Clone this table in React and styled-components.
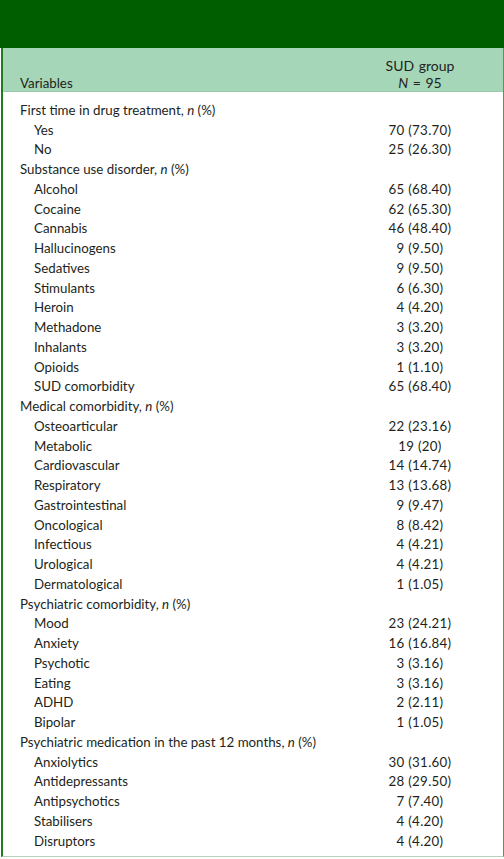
import React from "react";
import styled, { createGlobalStyle } from "styled-components";

const Global = createGlobalStyle`
  html, body { margin: 0; padding: 0; background: #ffffff; }
  body { font-family: Lato, "Open Sans", "Liberation Sans", sans-serif; color: #231f20; }
`;

const Page = styled.div`
  width: 504px;
`;

const TopBar = styled.div`
  height: 48px;
  background: #005e00;
`;

const Table = styled.div`
  margin-left: 1px;
  width: 500px;
  border-left: 2px solid #217b21;
  border-right: 1px solid #4f9a5c;
  border-bottom: 1px solid #b7cfbd;
`;

const HeadRow = styled.div`
  display: grid;
  grid-template-columns: 1fr 166px;
  align-items: end;
  height: 44px;
  background: #a5d6b7;
  border-bottom: 1px solid #9cc9ac;
  box-sizing: border-box;
  font-size: 13.3px;
`;

const HeadLabel = styled.div`
  padding-left: 17px;
  line-height: 16px;
`;

const HeadValue = styled.div`
  text-align: center;
  line-height: 17px;
  padding-bottom: 0;
  font-size: 14px;
  word-spacing: 1px;
`;

const Body = styled.div`
  padding: 8px 0 5px;
`;

const Row = styled.div`
  display: grid;
  grid-template-columns: 1fr 166px;
  height: 19.76px;
  align-items: center;
  font-size: 13.3px;
`;

const Label = styled.div`
  padding-left: ${(p) => (p.$indent ? 31 : 17)}px;
  white-space: nowrap;
`;

const Value = styled.div`
  text-align: center;
  white-space: nowrap;
  letter-spacing: 0.3px;
`;

const rows = [
  ["h", "First time in drug treatment"],
  ["i", "Yes", "70 (73.70)"],
  ["i", "No", "25 (26.30)"],
  ["h", "Substance use disorder"],
  ["i", "Alcohol", "65 (68.40)"],
  ["i", "Cocaine", "62 (65.30)"],
  ["i", "Cannabis", "46 (48.40)"],
  ["i", "Hallucinogens", "9 (9.50)"],
  ["i", "Sedatives", "9 (9.50)"],
  ["i", "Stimulants", "6 (6.30)"],
  ["i", "Heroin", "4 (4.20)"],
  ["i", "Methadone", "3 (3.20)"],
  ["i", "Inhalants", "3 (3.20)"],
  ["i", "Opioids", "1 (1.10)"],
  ["i", "SUD comorbidity", "65 (68.40)"],
  ["h", "Medical comorbidity"],
  ["i", "Osteoarticular", "22 (23.16)"],
  ["i", "Metabolic", "19 (20)"],
  ["i", "Cardiovascular", "14 (14.74)"],
  ["i", "Respiratory", "13 (13.68)"],
  ["i", "Gastrointestinal", "9 (9.47)"],
  ["i", "Oncological", "8 (8.42)"],
  ["i", "Infectious", "4 (4.21)"],
  ["i", "Urological", "4 (4.21)"],
  ["i", "Dermatological", "1 (1.05)"],
  ["h", "Psychiatric comorbidity"],
  ["i", "Mood", "23 (24.21)"],
  ["i", "Anxiety", "16 (16.84)"],
  ["i", "Psychotic", "3 (3.16)"],
  ["i", "Eating", "3 (3.16)"],
  ["i", "ADHD", "2 (2.11)"],
  ["i", "Bipolar", "1 (1.05)"],
  ["h", "Psychiatric medication in the past 12 months"],
  ["i", "Anxiolytics", "30 (31.60)"],
  ["i", "Antidepressants", "28 (29.50)"],
  ["i", "Antipsychotics", "7 (7.40)"],
  ["i", "Stabilisers", "4 (4.20)"],
  ["i", "Disruptors", "4 (4.20)"],
];

export default function App() {
  return (
    <Page>
      <Global />
      <TopBar />
      <Table>
        <HeadRow>
          <HeadLabel>Variables</HeadLabel>
          <HeadValue>
            SUD group
            <br />
            <i>N</i> = 95
          </HeadValue>
        </HeadRow>
        <Body>
          {rows.map(([t, label, val], i) =>
            t === "h" ? (
              <Row key={i}>
                <Label>
                  {label}, <i>n</i> (%)
                </Label>
                <Value />
              </Row>
            ) : (
              <Row key={i}>
                <Label $indent>{label}</Label>
                <Value>{val}</Value>
              </Row>
            )
          )}
        </Body>
      </Table>
    </Page>
  );
}
